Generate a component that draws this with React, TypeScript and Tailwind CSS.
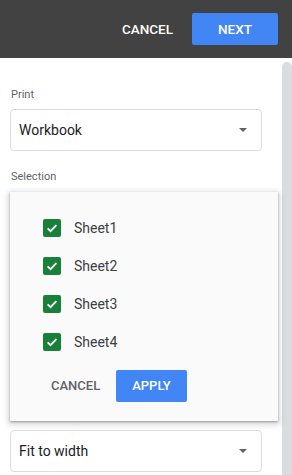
import React from 'react';

function Caret() {
  return (
    <svg width="8" height="4" viewBox="0 0 8 4" className="shrink-0">
      <path d="M0 0 L8 0 L4 4 Z" fill="#5f6368" />
    </svg>
  );
}

function SelectBox({ value }: { value: string }) {
  return (
    <div className="h-[42px] w-full border border-[#dadce0] rounded-[4px] bg-white flex items-center justify-between pl-[8px] pr-[14px]">
      <span className="text-[14px] text-[#202124]">{value}</span>
      <Caret />
    </div>
  );
}

function CheckRow({ label }: { label: string }) {
  return (
    <div className="flex items-center h-[38px]">
      <div className="w-[18px] h-[18px] rounded-[2px] bg-[#188038] flex items-center justify-center">
        <svg width="14" height="14" viewBox="0 0 24 24">
          <path d="M4.5 12.5 L9.5 17.5 L19.5 7" fill="none" stroke="white" strokeWidth="3" />
        </svg>
      </div>
      <span className="ml-[13px] text-[14px] text-[#3c4043]">{label}</span>
    </div>
  );
}

export default function App() {
  const sheets = ['Sheet1', 'Sheet2', 'Sheet3', 'Sheet4'];
  return (
    <div className="w-[292px] h-[475px] bg-white overflow-hidden flex flex-col" style={{ fontFamily: 'Roboto, "Liberation Sans", sans-serif' }}>
      <div className="h-[58px] bg-[#424242] flex items-center justify-end pr-[14px] shrink-0">
        <button className="text-white text-[13.5px] font-medium">CANCEL</button>
        <button className="ml-[19px] w-[86px] h-[32px] rounded-[2px] bg-[#4285f4] text-white text-[13.5px] font-medium">NEXT</button>
      </div>

      <div className="flex-1 flex">
        <div className="w-[282px] pl-[10px] pr-[20px]">
          <div className="pt-[29px] pl-[1px] text-[11px] leading-4 text-[#5f6368]">Print</div>
          <div className="mt-[6px]">
            <SelectBox value="Workbook" />
          </div>
          <div className="mt-[18px] pl-[1px] text-[11px] leading-4 text-[#5f6368]">Selection</div>

          <div className="relative mt-[7px] h-[238px]">
            <div className="h-[42px] w-full border border-[#dadce0] rounded-[4px] bg-white" />
            <div className="absolute top-0 left-0 w-[268px] h-[229px] bg-[#fafafa] shadow-[0_2px_6px_2px_rgba(0,0,0,0.15),0_1px_2px_rgba(0,0,0,0.3)] z-10">
              <div className="pl-[33px] pt-[17px]">
                {sheets.map((s) => (
                  <CheckRow key={s} label={s} />
                ))}
              </div>
              <div className="flex items-center pl-[25px] mt-[9px]">
                <button className="h-[32px] px-4 text-[13px] font-medium text-[#5f6368]">CANCEL</button>
                <button className="h-[32px] px-4 rounded-[2px] bg-[#4285f4] text-white text-[13px] font-medium">APPLY</button>
              </div>
            </div>
          </div>

          <SelectBox value="Fit to width" />
        </div>
        <div className="w-[10px] mt-[4px] bg-[#dadce0] rounded-t-[5px]" />
      </div>
    </div>
  );
}
